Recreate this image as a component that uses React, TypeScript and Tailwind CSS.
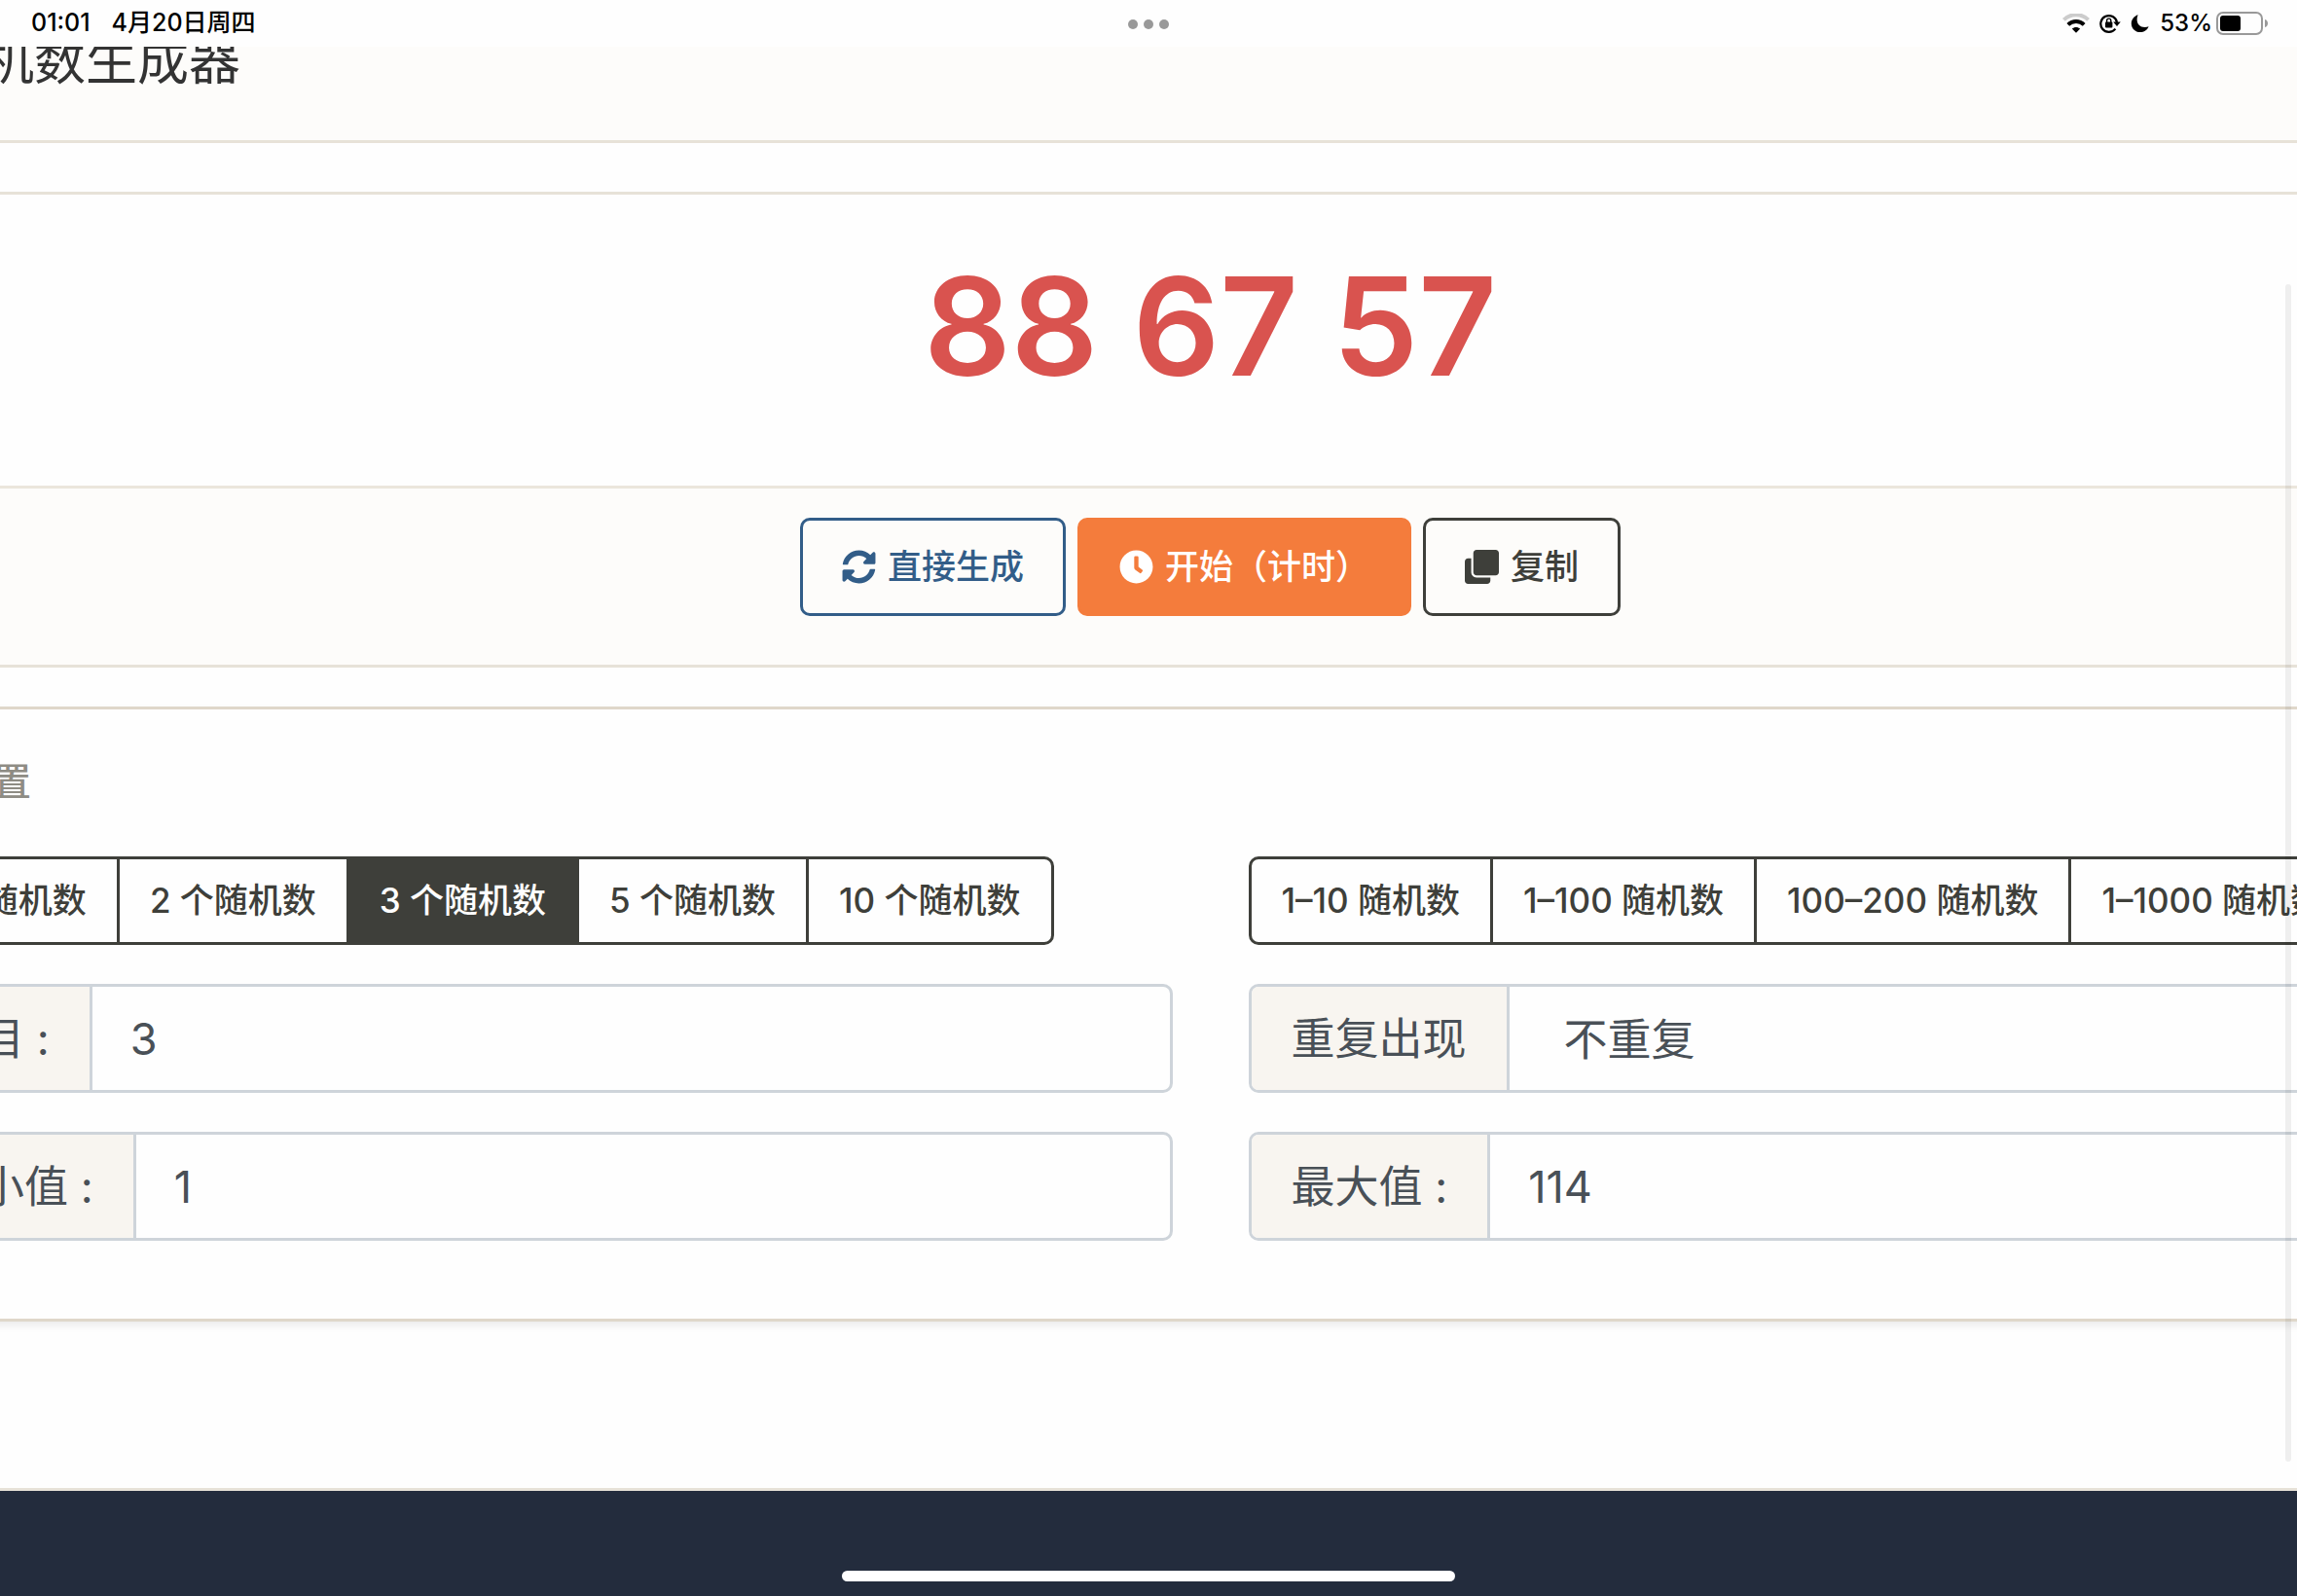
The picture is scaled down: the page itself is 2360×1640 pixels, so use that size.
import React, { useState } from "react";
import { FaClock, FaClone, FaCog, FaDice, FaSyncAlt } from "react-icons/fa";

const counts = [1, 2, 3, 5, 10];
const ranges = ["1–10", "1–100", "100–200", "1–1000", "1–10000"];

const StatusBar = () => {
  return (
    <div className="relative flex h-12 items-center justify-between pl-8 pr-[29px] font-medium text-black">
      <div className="flex gap-[22px] text-[25px]">
        <span>01:01</span>
        <span>4月20日周四</span>
      </div>

      <div className="absolute inset-x-0 top-5 flex justify-center gap-[6px]">
        <span className="size-[10px] rounded-full bg-[#999]" />
        <span className="size-[10px] rounded-full bg-[#999]" />
        <span className="size-[10px] rounded-full bg-[#999]" />
      </div>

      <div className="flex items-center gap-[10px] text-2xl">
        <svg className="h-5 w-7" viewBox="0 0 28 20" fill="none">
          <path
            d="M1.4 6.4C8.4-.6 19.6-.6 26.6 6.4"
            stroke="#ccc"
            strokeWidth="4"
          />
          <path
            d="M5.8 11.4c4.6-4.4 11.8-4.4 16.4 0"
            stroke="#000"
            strokeWidth="4"
          />
          <path d="M9.8 15.6c2.4-2.2 6-2.2 8.4 0L14 19.8z" fill="#000" />
        </svg>
        <svg className="h-5 w-[22px]" viewBox="0 0 22 20" fill="none">
          <path
            d="M16.4 15.6A8.4 8.4 0 1 1 18 9"
            stroke="#000"
            strokeWidth="2.2"
          />
          <path d="M14.2 8.4h7.6L18 13z" fill="#000" />
          <rect x="6" y="8.6" width="7.4" height="6" rx="1" fill="#000" />
          <path
            d="M7.6 9V7.2a2.1 2.1 0 0 1 4.2 0V9"
            stroke="#000"
            strokeWidth="1.4"
          />
        </svg>
        <svg className="h-5 w-5" viewBox="0 0 20 20">
          <path
            d="M7.6 1.2C3.6 2.6.8 6 .8 10.2c0 5 4 8.8 9 8.8 4 0 7.4-2.2 8.8-5.8-1.2.6-2.6.8-4 .8-4.8 0-8-3.2-8-8 0-1.6.2-3.2 1-4.8z"
            fill="#000"
          />
        </svg>
        <div className="flex items-center gap-1">
          <span>53%</span>
          <svg className="h-6 w-[54px]" viewBox="0 0 54 24" fill="none">
            <rect
              x="1"
              y="1"
              width="46"
              height="22"
              rx="6"
              stroke="#999"
              strokeWidth="2"
            />
            <rect x="4" y="4" width="21" height="16" rx="3" fill="#000" />
            <path d="M50 8c4 1 4 7 0 8z" fill="#999" />
          </svg>
        </div>
      </div>
    </div>
  );
};

const Field = ({
  id,
  label,
  children,
}: {
  id: string;
  label: string;
  children: React.ReactNode;
}) => {
  return (
    <div className="flex h-28 overflow-hidden rounded-[10px] border-[3px] border-[#ced4da] text-[45px] text-[#495057]">
      <label
        htmlFor={id}
        className="flex shrink-0 items-center whitespace-pre border-r-[3px] border-[#ced4da] bg-[#f8f5f0] px-[41px] pt-[2px]"
      >
        {label}
      </label>
      {children}
    </div>
  );
};

const groupButton =
  "-ml-[3px] h-full whitespace-nowrap border-[3px] border-[#3e3f3a] px-[31px] first:ml-0 first:rounded-l-[10px] last:rounded-r-[10px]";

const actionButton =
  "flex h-[101px] items-center gap-3 rounded-[10px] border-[3px] px-10";

const App = () => {
  const [count, setCount] = useState(3);
  const [min, setMin] = useState("1");
  const [max, setMax] = useState("114");

  return (
    <div className="relative flex min-h-screen flex-col overflow-hidden bg-[#fefefe] font-['Inter','Noto_Sans_CJK_SC',sans-serif]">
      <StatusBar />

      {/* the page is zoomed in, so both sides run off the screen */}
      <main className="-ml-[109px] -mr-[236px] flex grow flex-col">
        <header className="overflow-hidden border-b-[3px] border-[#e7e2d8] bg-[#fdfcfa] pb-[41px]">
          <h1 className="-mt-[25px] flex items-center gap-4 text-[53px] leading-[80px] text-[#333]">
            <FaDice className="w-[22px]" />
            随机数生成器
          </h1>
        </header>

        <section className="mt-[50px] border-y-[3px] border-[#e7e2d8]">
          <p className="flex h-[299px] items-center justify-center pb-[30px] text-[140px] font-semibold leading-none text-[#d9534f]">
            88 67 57
          </p>
          <div className="flex justify-center gap-3 border-t-[3px] border-[#ebe6dc] bg-[#fdfcfa] pb-[50px] pt-[30px] text-[35px] font-medium">
            <button
              className={`${actionButton} border-[#325d88] text-[#325d88]`}
            >
              <FaSyncAlt />
              直接生成
            </button>
            <button
              className={`${actionButton} border-[#f47c3c] bg-[#f47c3c] text-white`}
            >
              <FaClock />
              开始（计时）
            </button>
            <button
              className={`${actionButton} border-[#3e3f3a] text-[#3e3f3a]`}
            >
              <FaClone />
              复制
            </button>
          </div>
        </section>

        <section className="mt-10 border-y-[3px] border-[#dfd7ca] pb-20 pt-11 shadow-[0_4px_8px_rgba(0,0,0,0.08)]">
          <h2 className="mb-[47px] flex items-center gap-6 text-[39px] font-medium leading-[60px] text-[#8e8c84]">
            <FaCog />
            设置
          </h2>
          <div className="grid grid-cols-2 gap-x-[78px] gap-y-10">
            <div className="flex h-[91px] text-[35px] font-medium text-[#3e3f3a]">
              {counts.map((n) => (
                <button
                  key={n}
                  onClick={() => setCount(n)}
                  className={`${groupButton} ${
                    n === count ? "bg-[#3e3f3a] text-white" : ""
                  }`}
                >
                  {n} 个随机数
                </button>
              ))}
            </div>
            <div className="flex h-[91px] text-[35px] font-medium text-[#3e3f3a]">
              {ranges.map((range) => (
                <button key={range} className={groupButton}>
                  {range} 随机数
                </button>
              ))}
            </div>

            <Field id="count" label="数目 :">
              <input
                id="count"
                value={count}
                onChange={(e) => setCount(Number(e.target.value))}
                className="min-w-0 grow px-[39px] pt-[2px] outline-none"
              />
            </Field>
            <Field id="repeat" label="重复出现">
              <select
                id="repeat"
                className="min-w-0 grow appearance-none bg-transparent px-14 pt-1 outline-none"
              >
                <option>不重复</option>
                <option>可重复</option>
              </select>
            </Field>

            <Field id="min" label="最小值 :">
              <input
                id="min"
                value={min}
                onChange={(e) => setMin(e.target.value)}
                className="min-w-0 grow px-[39px] pt-[2px] outline-none"
              />
            </Field>
            <Field id="max" label="最大值 :">
              <input
                id="max"
                value={max}
                onChange={(e) => setMax(e.target.value)}
                className="min-w-0 grow px-[39px] pt-[2px] outline-none"
              />
            </Field>
          </div>
        </section>
      </main>

      <footer className="flex h-[111px] items-end justify-center border-t-[3px] border-[#e7e2d8] bg-[#232c3d] pb-[15px]">
        <div className="h-[11px] w-[630px] rounded-full bg-white" />
      </footer>

      {/* page scroll thumb */}
      <div className="absolute bottom-[138px] right-[6px] top-[292px] w-[6px] rounded-full bg-black/6" />
    </div>
  );
};

export default App;
